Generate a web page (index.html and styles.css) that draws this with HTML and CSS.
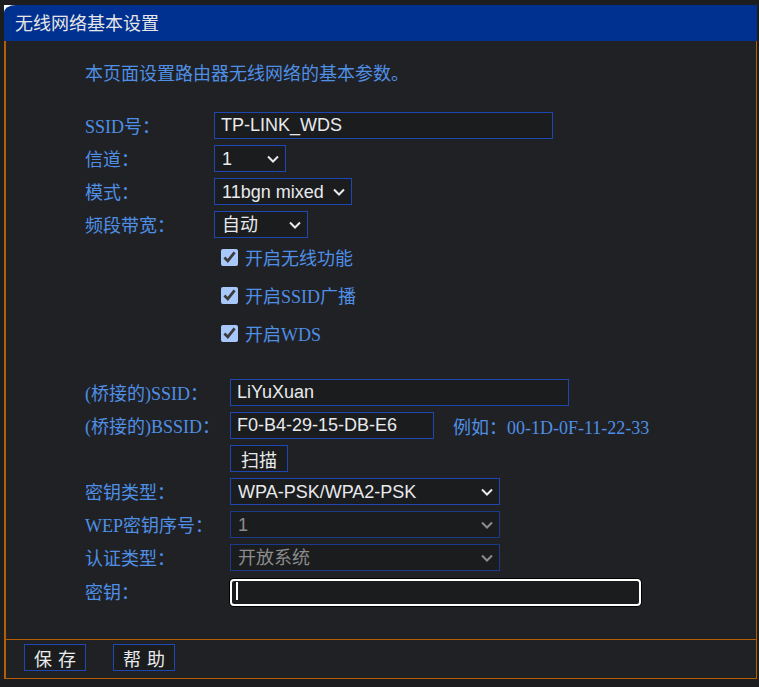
FILE: index.html
```html
<!DOCTYPE html>
<html lang="zh-CN">
<head>
    <meta charset="UTF-8">
    <title>无线网络基本设置</title>
    <link rel="stylesheet" href="styles.css">
</head>
<body>
    <div class="panel">
        <div class="head">
            <div class="title">无线网络基本设置</div>
        </div>
        <div class="content">
            <p class="intro">本页面设置路由器无线网络的基本参数。</p>

            <div class="form form-basic">
                <label class="lbl"><span class="en">SSID</span>号：</label>
                <input class="field w-ssid" type="text" value="TP-LINK_WDS">

                <label class="lbl">信道：</label>
                <select class="field w-channel"><option>1</option></select>

                <label class="lbl">模式：</label>
                <select class="field w-mode"><option>11bgn mixed</option></select>

                <label class="lbl">频段带宽：</label>
                <select class="field w-band"><option>自动</option></select>
            </div>

            <div class="checks">
                <label class="check"><input type="checkbox" checked><span>开启无线功能</span></label>
                <label class="check"><input type="checkbox" checked><span>开启<span class="en">SSID</span>广播</span></label>
                <label class="check"><input type="checkbox" checked><span>开启<span class="en">WDS</span></span></label>
            </div>

            <div class="form form-wds">
                <label class="lbl"><span class="en">(</span>桥接的<span class="en">)SSID</span>：</label>
                <input class="field w-ssid" type="text" value="LiYuXuan">

                <label class="lbl"><span class="en">(</span>桥接的<span class="en">)BSSID</span>：</label>
                <div class="inline">
                    <input class="field w-bssid" type="text" value="F0-B4-29-15-DB-E6">
                    <span class="hint">例如：<span class="en">00-1D-0F-11-22-33</span></span>
                </div>

                <span></span>
                <div><button class="btn btn-scan">扫描</button></div>

                <label class="lbl">密钥类型：</label>
                <select class="field w-wide"><option>WPA-PSK/WPA2-PSK</option></select>

                <label class="lbl"><span class="en">WEP</span>密钥序号：</label>
                <select class="field w-wide" disabled><option>1</option></select>

                <label class="lbl">认证类型：</label>
                <select class="field w-wide" disabled><option>开放系统</option></select>

                <label class="lbl">密钥：</label>
                <div class="key-wrap">
                    <input class="field key" type="password" value="">
                    <span class="caret"></span>
                </div>
            </div>
        </div>
        <div class="footer">
            <button class="btn btn-wide">保存</button>
            <button class="btn btn-wide">帮助</button>
        </div>
    </div>
</body>
</html>
```

FILE: styles.css
```css
* {
    margin: 0;
    padding: 0;
    box-sizing: border-box;
}

html {
    color-scheme: dark;
}

body {
    background-color: #1c1d1f;
    font-family: "Noto Sans CJK SC", sans-serif;
    font-size: 18px;
}

.panel {
    width: 753px;
    margin: 5px 0 0 4px;
}

.head {
    background: linear-gradient(#ffffff, #ffffff) no-repeat 0 0 / 12px 8px;
}

.title {
    height: 36px;
    line-height: 35px;
    padding-left: 11px;
    background-color: #003090;
    border-top-left-radius: 12px 8px;
    color: #e6e6e6;
    font-size: 18px;
}

.content {
    height: 599px;
    padding: 19px 0 0 79px;
    background-color: #202124;
    border-left: 2px solid #b45f06;
    border-right: 1px solid #b45f06;
    border-bottom: 1px solid #b45f06;
    color: #4f8fe6;
}

/* latin part of the labels, close to the old serif bitmap font */
.en {
    font-family: "Liberation Serif", serif;
    font-size: 18px;
}

.intro {
    height: 24px;
    line-height: 24px;
    margin-bottom: 28px;
}

.form {
    display: grid;
    row-gap: 6px;
    align-items: center;
}

.form-basic {
    grid-template-columns: 129px 1fr;
}

.form-wds {
    grid-template-columns: 145px 1fr;
    margin-top: 27px;
}

.lbl {
    height: 27px;
    line-height: 27px;
    white-space: nowrap;
}

.field {
    height: 27px;
    background-color: #1b1c1e;
    border: 1px solid #1f47b4;
    border-radius: 0;
    color: #e8eaed;
    font-family: "Liberation Sans", Arial, sans-serif;
    font-size: 18px;
    padding: 0 6px;
    outline: none;
}

select.field {
    appearance: none;
    padding: 0 22px 0 7px;
    background-image: url("data:image/svg+xml,%3Csvg xmlns='http://www.w3.org/2000/svg' width='12' height='8' viewBox='0 0 12 8'%3E%3Cpath d='M1 1.5l5 5 5-5' fill='none' stroke='%23e8eaed' stroke-width='2'/%3E%3C/svg%3E");
    background-repeat: no-repeat;
    background-position: right 6px center;
    background-size: 12px 8px;
}

.field:disabled {
    color: #8c8c8c;
    border-color: #1c3a8c;
    opacity: 1;
}

select.field:disabled {
    background-image: url("data:image/svg+xml,%3Csvg xmlns='http://www.w3.org/2000/svg' width='12' height='8' viewBox='0 0 12 8'%3E%3Cpath d='M1 1.5l5 5 5-5' fill='none' stroke='%238c8c8c' stroke-width='2'/%3E%3C/svg%3E");
}

.w-ssid { width: 339px; }
.w-channel { width: 72px; }
.w-mode { width: 138px; }
.w-band { width: 94px; }
.w-bssid { width: 204px; }
.w-wide { width: 270px; }

.checks {
    padding-left: 136px;
}

.check {
    height: 38px;
    display: flex;
    align-items: center;
    gap: 7px;
    color: #4f8fe6;
}

.check input {
    width: 17px;
    height: 17px;
    accent-color: #a8c7fa;
}

.inline {
    display: flex;
    align-items: center;
    gap: 19px;
}

.hint {
    white-space: nowrap;
}

.btn {
    height: 27px;
    padding: 0 6px;
    background-color: #1b1c1e;
    border: 1px solid #1f47b4;
    color: #e8eaed;
    font-family: "Noto Sans CJK SC", sans-serif;
    font-size: 18px;
    line-height: 24px;
}

.btn-scan {
    width: 58px;
}

.key-wrap {
    position: relative;
    width: 411px;
}

.key {
    width: 411px;
    border: 2px solid #ffffff;
    border-radius: 4px;
    box-shadow: 0 0 0 1px #000000;
}

.caret {
    position: absolute;
    left: 6px;
    top: 5px;
    width: 2px;
    height: 18px;
    background-color: #ffffff;
}

.footer {
    height: 39px;
    padding: 4px 0 0 18px;
    display: flex;
    align-items: flex-start;
    gap: 27px;
    background-color: #202124;
    border-left: 2px solid #b45f06;
    border-right: 1px solid #b45f06;
    border-bottom: 1px solid #b45f06;
}

.btn-wide {
    width: 62px;
    letter-spacing: 6px;
    padding: 0 0 0 6px;
}
```
